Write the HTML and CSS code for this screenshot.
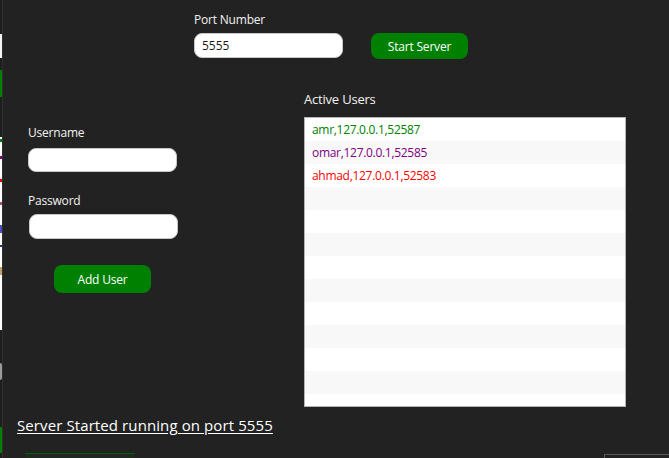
FILE: index.html
```html
<!DOCTYPE html>
<html>
<head>
<meta charset="utf-8">
<link rel="stylesheet" href="styles.css">
</head>
<body>
<div class="window">
  <div class="edge">
    <div class="edge-box edge-white"></div>
    <div class="edge-box edge-green"></div>
    <div class="edge-panel">
      <span class="bit bit-green"></span>
      <span class="bit bit-purple"></span>
      <span class="bit bit-red"></span>
      <span class="bit bit-pink"></span>
      <span class="bit bit-blue"></span>
      <span class="bit bit-navy"></span>
      <span class="bit bit-tan"></span>
    </div>
    <div class="edge-box edge-round"></div>
    <div class="edge-box edge-green2"></div>
  </div>
  <div class="main">
    <div class="port-block">
      <div class="label">Port Number</div>
      <div class="port-row">
        <input class="field port-field" type="text" value="5555">
        <button class="btn start-btn">Start Server</button>
      </div>
    </div>
    <div class="content">
      <div class="form-col">
        <div class="label">Username</div>
        <input class="field user-field" type="text">
        <div class="label pass-label">Password</div>
        <input class="field pass-field" type="password">
        <button class="btn add-btn">Add User</button>
      </div>
      <div class="users-col">
        <div class="label users-label">Active Users</div>
        <div class="list">
          <div class="row c-green">amr,127.0.0.1,52587</div>
          <div class="row c-purple">omar,127.0.0.1,52585</div>
          <div class="row c-red">ahmad,127.0.0.1,52583</div>
          <div class="row"></div>
          <div class="row"></div>
          <div class="row"></div>
          <div class="row"></div>
          <div class="row"></div>
          <div class="row"></div>
          <div class="row"></div>
          <div class="row"></div>
          <div class="row"></div>
          <div class="row"></div>
        </div>
      </div>
    </div>
    <div class="status">Server Started running on port 5555</div>
    <div class="bottom-row">
      <div class="ghost-btn"></div>
      <div class="ghost-win"></div>
    </div>
  </div>
</div>
</body>
</html>
```
FILE: styles.css
```css
html, body {
  margin: 0;
  padding: 0;
  background: #222222;
}
.window {
  display: flex;
  width: 669px;
  height: 458px;
  overflow: hidden;
  background: #222222;
  font-family: "Open Sans", "Noto Sans", sans-serif;
  color: #ffffff;
}
.edge {
  width: 2px;
  border-right: 1px solid #2f2f2f;
  background: #1e1e1e;
  display: flex;
  flex-direction: column;
}
.edge-box { width: 2px; }
.edge-white { margin-top: 34px; height: 24px; background: #f4f4f4; }
.edge-green { margin-top: 12px; height: 27px; background: #008000; }
.edge-panel {
  margin-top: 40px;
  height: 193px;
  background: #ffffff;
  display: flex;
  flex-direction: column;
}
.bit { display: block; width: 2px; height: 3px; }
.bit-green { margin-top: 2px; background: #008000; }
.bit-purple { margin-top: 14px; background: #800080; }
.bit-red { margin-top: 20px; background: #e00000; }
.bit-pink { margin-top: 20px; background: #b05070; }
.bit-blue { margin-top: 20px; height: 8px; background: #5050c0; }
.bit-navy { margin-top: 12px; height: 2px; background: #303090; }
.bit-tan { margin-top: 20px; height: 8px; background: #c0a070; }
.edge-round { margin-top: 33px; height: 17px; background: #9a9a9a; border-radius: 0 2px 2px 0; }
.edge-green2 { margin-top: 47px; height: 26px; background: #008000; }

.main {
  flex: 1;
  display: flex;
  flex-direction: column;
}
.label {
  font-size: 12px;
  line-height: 16px;
  letter-spacing: -0.2px;
  color: #f2f2f2;
}
.port-block {
  margin-left: 191px;
  padding-top: 12px;
}
.port-row {
  display: flex;
  align-items: flex-start;
  margin-top: 5px;
}
.field {
  box-sizing: border-box;
  margin: 0;
  background: #ffffff;
  border: 1px solid #c8c8c8;
  border-radius: 8px;
  outline: none;
  font-family: "Open Sans", "Noto Sans", sans-serif;
  font-size: 12px;
  color: #1a1a1a;
  padding: 0 7px;
}
.port-field { width: 149px; height: 25px; }
.btn {
  box-sizing: border-box;
  margin: 0;
  border: none;
  background: #008000;
  color: #ffffff;
  border-radius: 8px;
  font-family: "Open Sans", "Noto Sans", sans-serif;
  font-size: 12px;
  letter-spacing: -0.2px;
  padding: 0;
}
.start-btn { margin-left: 28px; width: 97px; height: 26px; }

.content {
  display: flex;
  margin-top: 32px;
}
.form-col {
  width: 276px;
  margin-left: 25px;
  padding-top: 34px;
  display: flex;
  flex-direction: column;
  align-items: flex-start;
}
.user-field { margin-top: 7px; width: 149px; height: 24px; }
.pass-label { margin-top: 21px; }
.pass-field { margin-top: 5px; margin-left: 1px; width: 149px; height: 25px; }
.add-btn { margin-top: 26px; margin-left: 26px; width: 97px; height: 28px; }

.users-col {
  display: flex;
  flex-direction: column;
}
.users-label { font-size: 13px; line-height: 17px; }
.list {
  margin-top: 9px;
  width: 322px;
  height: 290px;
  box-sizing: border-box;
  border: 1px solid #b4b4b4;
  background: #ffffff;
  overflow: hidden;
}
.row {
  height: 23px;
  line-height: 23px;
  padding-left: 7px;
  font-size: 12px;
  letter-spacing: -0.3px;
}
.row:nth-child(even) { background: #f8f8f8; }
.c-green { color: #008000; }
.c-purple { color: #800080; }
.c-red { color: #ff0000; }

.status {
  margin-top: 8px;
  margin-left: 14px;
  font-size: 15px;
  line-height: 20px;
  letter-spacing: 0.1px;
  text-decoration: underline;
  text-underline-offset: 2px;
  color: #ffffff;
}
.bottom-row {
  display: flex;
  justify-content: space-between;
  margin-top: 18px;
}
.ghost-btn {
  margin-left: 22px;
  width: 110px;
  height: 6px;
  border-top: 1px solid #0b5a0b;
  background: #1f2a1f;
}
.ghost-win {
  margin-top: 1px;
  width: 64px;
  height: 6px;
  border-top: 1px solid #5a5a5a;
  border-left: 1px solid #5a5a5a;
}
```
